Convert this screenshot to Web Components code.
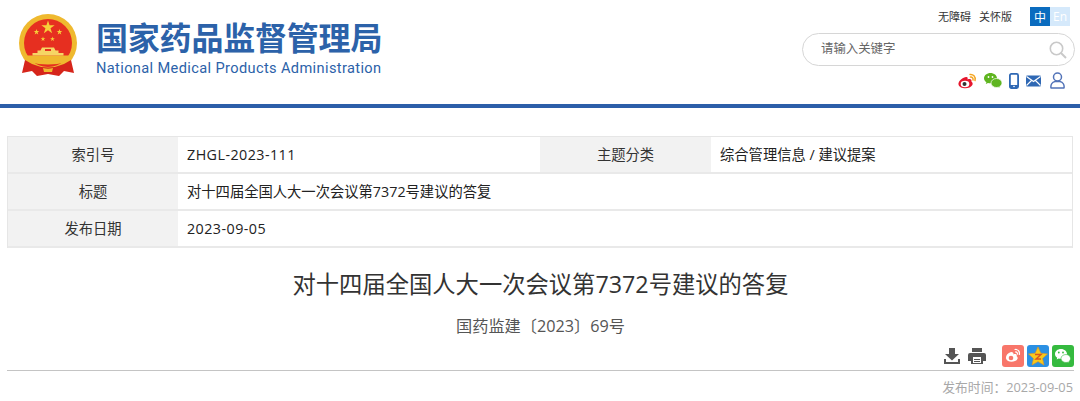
<!DOCTYPE html>
<html lang="zh"><head><meta charset="utf-8"><title>国家药品监督管理局</title>
<style>
html,body{margin:0;padding:0;background:#fff;height:401px;overflow:hidden}
body{font-family:"Open Sans","Noto Sans CJK SC",sans-serif;color:#333}
</style></head><body>
<nmpa-header></nmpa-header>
<meta-table>
  <meta-row label="索引号" value="ZHGL-2023-111" latin label2="主题分类" value2="综合管理信息 / 建议提案"></meta-row>
  <meta-row label="标题" value="对十四届全国人大一次会议第7372号建议的答复"></meta-row>
  <meta-row label="发布日期" value="2023-09-05" latin></meta-row>
</meta-table>
<article-head heading="对十四届全国人大一次会议第7372号建议的答复" sub="国药监建〔2023〕69号" date="发布时间：2023-09-05"></article-head>
<script>
function def(name,html){customElements.define(name,class extends HTMLElement{connectedCallback(){if(this.shadowRoot)return;const s=this.attachShadow({mode:'open'});s.innerHTML=typeof html==='function'?html(this):html;}})}
const STAR="0,-1 .225,-.309 .951,-.309 .363,.118 .588,.809 0,.382 -.588,.809 -.363,.118 -.951,-.309 -.225,-.309";
const star=(x,y,r)=>`<polygon points="${STAR}" transform="translate(${x} ${y}) scale(${r})" fill="#f6cf3a"/>`;

def('nmpa-emblem',`<style>:host{display:block;width:60px;height:63px}svg{display:block}</style>
<svg width="60" height="63" viewBox="0 0 60 63">
<circle cx="30" cy="29" r="29" fill="#efb92f"/>
<circle cx="30" cy="29" r="24" fill="#e62f20"/>
${star(30,13.5,7)}${star(18.500,18,3)}${star(41.500,18,3)}${star(25,25,2.500)}${star(34.500,25,2.500)}
<path d="M6 41.500h48l-3 6q-21 6 -42 0z" fill="#efb92f"/>
<path d="M24 33.500h12l1.500 3h3v2.500h5v2.500h-31V39h5v-2.500h3z" fill="#f6d565"/>
<rect x="27" y="35" width="6" height="2" fill="#e62f20"/>
<path d="M7 46 L14 50 Q30 57 46 50 L53 46 L56 59 L46 57 L41 62 L30 60 L19 62 L14 57 L4 59Z" fill="#d6251b"/>
<path d="M25 54q5 1.500 10 0l-1 4h-8z" fill="#efb92f"/>
</svg>`);

def('search-box',`<style>
:host{display:flex;align-items:center;justify-content:space-between;box-sizing:border-box;width:273px;height:33px;border:1.5px solid #d6d6d6;border-radius:17px;padding:0 7px 0 18px;background:#fff}
span{font:12.4px/14px "Noto Sans CJK SC",sans-serif;color:#666;padding-bottom:3px}
svg{display:block}
</style><span>请输入关键字</span>
<svg width="18" height="18" viewBox="0 0 18 18" fill="none" stroke="#c9c9c9"><circle cx="7.5" cy="7.5" r="6.2" stroke-width="1.6"/><path d="M12 12l5 5" stroke-width="2"/></svg>`);

def('social-icons',`<style>:host{display:flex;align-items:center;gap:0}svg{display:block}</style>
<svg style="margin-right:7px" width="19" height="16" viewBox="0 0 19 16"><path d="M8 4C3 5 0 9 .5 11.500 1.500 15.500 8 16 11.500 14.500 15 13 15.500 10 13.500 8.800 14 6 12 5.500 9.500 6.500 10 4.500 9.500 3.800 8 4Z" fill="#e6162d"/><ellipse cx="7" cy="11" rx="4.300" ry="3.300" fill="#fff"/><circle cx="6.500" cy="11" r="2" fill="#333"/><path d="M12 1.500c3-.5 6 2 5 6M12.500 4c1.500-.3 3 1 2.500 3" fill="none" stroke="#f5a623" stroke-width="1.500" stroke-linecap="round"/></svg>
<svg style="margin-right:7px" width="18" height="15" viewBox="0 0 18 15"><path d="M6.500 0C3 0 0 2.300 0 5.200 0 7 1 8.300 2.400 9.200L1.800 11l2.200-1.100c.8.200 1.700.4 2.500.4C10 10.300 13 8 13 5.200S10 0 6.500 0Z" fill="#5fb520"/><path d="M12.500 5.500C9.500 5.500 7 7.500 7 10s2.500 4.500 5.500 4.500c.7 0 1.300-.1 1.900-.3l1.800 .9-.5-1.500C17 12.800 18 11.500 18 10c0-2.500-2.500-4.500-5.500-4.500Z" fill="#5fb520" stroke="#fff" stroke-width=".7"/><circle cx="4.500" cy="4" r=".9" fill="#fff"/><circle cx="8.500" cy="4" r=".9" fill="#fff"/></svg>
<svg style="margin-right:7px" width="10" height="16" viewBox="0 0 10 16"><rect x=".9" y=".9" width="8.200" height="14.200" rx="1.500" fill="#fff" stroke="#2f68b4" stroke-width="1.800"/><rect x="1" y="12" width="8" height="3" fill="#2f68b4"/><circle cx="5" cy="13.500" r=".8" fill="#fff"/></svg>
<svg style="margin-right:9px" width="15" height="12" viewBox="0 0 15 12"><rect width="15" height="11" y=".5" rx="1.200" fill="#2f68b4"/><path d="M.5 1.500l7 5 7-5M.5 10.500l5-5M14.500 10.500l-5-5" fill="none" stroke="#fff" stroke-width="1.100"/></svg>
<svg width="15" height="17" viewBox="0 0 15 17" fill="none" stroke="#5273b8" stroke-width="1.500"><circle cx="7.500" cy="5" r="4"/><path d="M1 16c-.5-3 1-5.800 4-6.500h5c3 .7 4.500 3.500 4 6.500Z" stroke-linejoin="round"/></svg>`);

def('lang-switch',`<style>:host{display:flex;font:12px "Noto Sans CJK SC",sans-serif}
span{display:flex;align-items:center;justify-content:center;width:20px;height:19px}
.a{background:#0a6cbf;color:#fff}.b{background:#d5e9fb;color:#fff;font-family:"Open Sans";}
</style><span class="a">中</span><span class="b">En</span>`);

def('nmpa-header',`<style>
:host{display:block;box-sizing:border-box;height:108px;border-bottom:4px solid #2c5ea9;background:#fff}
.w{display:flex;justify-content:space-between;height:104px}
.brand{display:flex;padding:14px 0 0 18px}
nmpa-emblem{margin-right:18px}
.t{display:flex;flex-direction:column;margin-top:4px}
.cn{font:700 32px/36px "Noto Sans CJK SC",sans-serif;color:#2c62a9;letter-spacing:-.2px;white-space:nowrap;width:286px}
.en{font:14.6px/18px "Roboto",sans-serif;color:#2c62a9;margin-top:5px;white-space:nowrap;letter-spacing:.37px}
.tools{display:flex;flex-direction:column;align-items:flex-end;padding:7px 5px 0 0}
.top{display:flex;align-items:center;font:11px/19px "Noto Sans CJK SC",sans-serif;color:#333;margin-right:5px}
.top a{margin-right:8px}
.top a:nth-child(2){margin-right:18px}
search-box{margin-top:7px}
social-icons{margin-top:6px;margin-right:10px}
</style><div class="w">
<div class="brand"><nmpa-emblem></nmpa-emblem><div class="t"><div class="cn">国家药品监督管理局</div><div class="en">National Medical Products Administration</div></div></div>
<div class="tools"><div class="top"><a>无障碍</a><a>关怀版</a><lang-switch></lang-switch></div><search-box></search-box><social-icons></social-icons></div>
</div>`);

def('meta-table',`<style>:host{display:block;margin:28px 7px 0;border-top:1px solid #e6e6e6;border-left:1px solid #e6e6e6;border-right:1px solid #e6e6e6}</style><slot></slot>`);

def('meta-row',el=>{const l2=el.getAttribute('label2');return `<style>
:host{display:grid;grid-template-columns:170px ${l2?'362px 171px 1fr':'1fr'};height:37px;box-sizing:border-box;border-bottom:2px solid #e9e9e9;font:14.3px/35px "Open Sans","Noto Sans CJK SC",sans-serif;color:#333}
.l{background:#f2f2f2;text-align:center}.v{padding-left:9px;color:#222}
.lat{letter-spacing:.45px}
</style><div class="l">${el.getAttribute('label')}</div><div class="v${el.hasAttribute('latin')?' lat':''}">${el.getAttribute('value')}</div>${l2?`<div class="l">${l2}</div><div class="v">${el.getAttribute('value2')}</div>`:''}`});

def('share-tools',`<style>:host{display:flex;align-items:center;height:22px}svg{display:block}</style>
<svg style="margin-right:7px" width="18" height="18" viewBox="0 0 18 18"><path d="M6 1h6v6h4l-7 6.500L2 7h4z" fill="#555"/><path d="M1 12v5h16v-5h-2v3H3v-3z" fill="#555"/></svg>
<svg style="margin-right:16px" width="18" height="18" viewBox="0 0 18 18"><path d="M4 1h10v4H4z" fill="#555"/><path d="M2 6h14a2 2 0 0 1 2 2v6h-3v3H3v-3H0V8a2 2 0 0 1 2-2z" fill="#555"/><rect x="5" y="10" width="8" height="6" fill="#fff"/><rect x="6" y="12" width="6" height="1" fill="#555"/><rect x="6" y="14" width="6" height="1" fill="#555"/></svg>
<svg style="margin-right:3px" width="22" height="22" viewBox="0 0 22 22"><rect width="22" height="22" rx="3" fill="#f8766a"/><path d="M9 7C5.500 8 3.500 11 4 13.500 5 17 10 17.500 13 16c3-1.300 3.300-3.800 1.700-4.800.4-2.200-1.300-2.600-3.300-1.800.4-1.600-.9-2.600-2.400-2.400Z" fill="#fff"/><circle cx="9" cy="13" r="2.300" fill="#f8766a"/><path d="M13 4.500c3-.3 5 2 4.300 5M13.500 7c1.400-.2 2.200 1 1.900 2.200" fill="none" stroke="#fff" stroke-width="1.200" stroke-linecap="round"/></svg>
<svg style="margin-right:3px" width="22" height="22" viewBox="0 0 22 22"><rect width="22" height="22" rx="3" fill="#2b90e3"/><path d="M11 2l2.800 6.200 6.700.7-5 4.500 1.500 6.600L11 16.600 5 20l1.500-6.600-5-4.500 6.700-.7z" fill="#f7c91b" stroke="#e8951b" stroke-width=".6"/><path d="M8 9.500h6l-5 4.500h5" fill="none" stroke="#d9541f" stroke-width="1.400"/></svg>
<svg width="22" height="22" viewBox="0 0 22 22"><rect width="22" height="22" rx="3" fill="#35ba3f"/><path d="M9 4C5.500 4 3 6.200 3 9c0 1.600.9 2.900 2.200 3.800l-.5 1.600 1.900-1c.7.200 1.500.3 2.400.3 3.500 0 6-2.200 6-4.700S12.500 4 9 4Z" fill="#fff"/><path d="M14 9.500c-2.800 0-5 1.800-5 4s2.200 4 5 4c.6 0 1.100-.1 1.600-.2l1.500.8-.4-1.300c1-.7 1.800-2 1.800-3.300 0-2.200-1.700-4-4.500-4Z" fill="#fff" stroke="#35ba3f" stroke-width=".6"/><circle cx="6.800" cy="7.500" r=".9" fill="#35ba3f"/><circle cx="11" cy="7.500" r=".9" fill="#35ba3f"/></svg>`);

def('article-head',el=>`<style>
:host{display:block;margin:0 6px 0 7px}
h1{margin:20px 0 0;font:400 23.3px/32px "Open Sans","Noto Sans CJK SC",sans-serif;color:#333;text-align:center}
.sub{margin-top:14px;font:16.2px/24px "Open Sans","Noto Sans CJK SC",sans-serif;color:#555;text-align:center}
.bar{display:flex;justify-content:flex-end;margin-top:7px;padding-bottom:3px;border-bottom:1px solid #c4c4c4}
.date{margin-top:6px;text-align:right;font:12.8px/20px "Open Sans","Noto Sans CJK SC",sans-serif;color:#a8a8a8;padding-right:1px}
</style><h1>${el.getAttribute('heading')}</h1><div class="sub">${el.getAttribute('sub')}</div><div class="bar"><share-tools></share-tools></div><div class="date">${el.getAttribute('date')}</div>`);
</script>
</body></html>
